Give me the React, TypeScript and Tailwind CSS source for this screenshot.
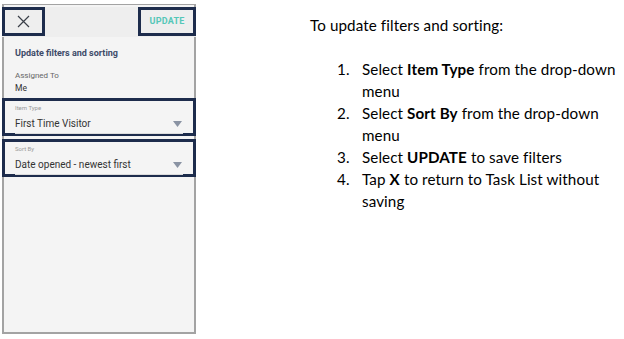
import React from "react";

const navy = "border-[#1d2c4c]";

function Field({ label, value }: { label: string; value: string }) {
  return (
    <div className={`border-[3px] ${navy} h-[38px] px-[10px] pt-[3px] flex flex-col`}>
      <div className="text-[6px] leading-[8px] text-[#9a9a9a]">{label}</div>
      <div className="flex items-center justify-between mt-[6px] border-b border-[#dcdcdc] pb-[3px]">
        <span className="text-[10px] leading-[12px] text-[#333]">{value}</span>
        <svg width="9" height="6" viewBox="0 0 9 6" className="mr-[1px]">
          <path d="M0 0 L9 0 L4.5 6 Z" fill="#8a93a3" />
        </svg>
      </div>
    </div>
  );
}

export default function App() {
  return (
    <div
      className="w-[624px] h-[339px] bg-white flex"
      style={{ fontFamily: "Roboto, 'Liberation Sans', sans-serif" }}
    >
      <div className="shrink-0 ml-[2px] mt-[4px] w-[194px] h-[330px] border-2 border-t border-[#a3a3a3] bg-[#f4f4f4] flex flex-col">
        <div className="h-[30px] bg-[#eeeeee] flex justify-between -mx-[2px] mt-[2px]">
          <div className={`w-[43px] h-[29px] border-[3px] ${navy} flex items-center justify-center`}>
            <svg width="13" height="13" viewBox="0 0 13 13">
              <path d="M1 1 L12 12 M12 1 L1 12" stroke="#3a3f48" strokeWidth="1.2" />
            </svg>
          </div>
          <div className={`w-[58px] h-[29px] border-[3px] ${navy} flex items-center justify-center`}>
            <span className="text-[9px] font-bold text-[#55c7b8] tracking-[0.2px]">UPDATE</span>
          </div>
        </div>
        <div className="px-[11px] pt-[10px]">
          <div className="text-[9px] font-bold text-[#3d4b68] leading-[12px]">Update filters and sorting</div>
          <div className="mt-[11px] text-[8px] text-[#666] leading-[11px]">Assigned To</div>
          <div className="text-[8.5px] text-[#333] leading-[12px] mt-[1px]">Me</div>
        </div>
        <div className="-mx-[2px] mt-[4px] flex flex-col gap-[3px]">
          <Field label="Item Type" value="First Time Visitor" />
          <Field label="Sort By" value="Date opened - newest first" />
        </div>
      </div>

      <div
        className="shrink-0 ml-[114px] pt-[14px] text-[15.2px] tracking-[0.1px] text-black leading-[22px]"
        style={{ fontFamily: "Lato, 'Open Sans', sans-serif" }}
      >
        <div>To update filters and sorting:</div>
        <ol className="mt-[22px] flex flex-col">
          {[
            [<>Select <b>Item Type</b> from the drop-down</>, "menu"],
            [<>Select <b>Sort By</b> from the drop-down</>, "menu"],
            [<>Select <b>UPDATE</b> to save filters</>],
            [<>Tap <b>X</b> to return to Task List without</>, "saving"],
          ].map((lines, i) => (
            <li key={i} className="flex whitespace-nowrap">
              <span className="w-[25px] ml-[27px]">{i + 1}.</span>
              <div className="flex flex-col">
                {lines.map((l, j) => (
                  <span key={j}>{l}</span>
                ))}
              </div>
            </li>
          ))}
        </ol>
      </div>
    </div>
  );
}
